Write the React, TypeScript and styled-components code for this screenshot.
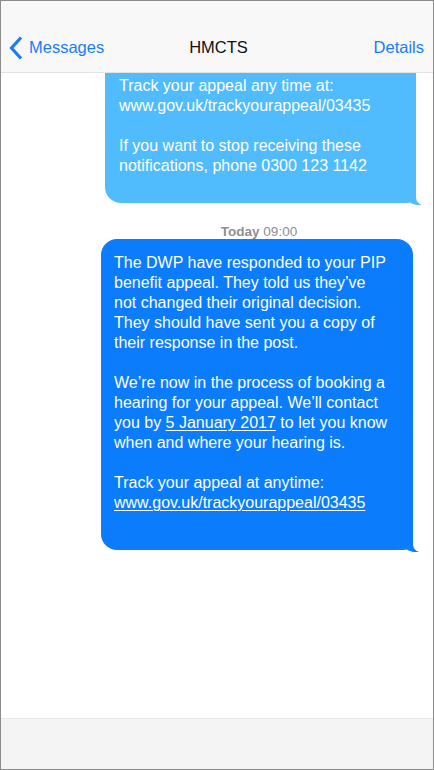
import React from "react";
import styled, { createGlobalStyle } from "styled-components";

const Global = createGlobalStyle`
  html, body { margin: 0; padding: 0; background: #ffffff; }
  body { font-family: "Liberation Sans", Arial, sans-serif; -webkit-font-smoothing: antialiased; }
  * { box-sizing: border-box; }
`;

const Phone = styled.div`
  width: 434px;
  height: 770px;
  border: 1px solid #8c8c8c;
  display: flex;
  flex-direction: column;
  background: #ffffff;
  overflow: hidden;
`;

const NavBar = styled.header`
  height: 72px;
  flex: none;
  padding-top: 22px;
  background: #f8f8f8;
  border-bottom: 1px solid #e2e2e2;
  display: grid;
  grid-template-columns: 1fr auto 1fr;
  align-items: center;
  font-size: 16.5px;
`;

const BackButton = styled.div`
  display: flex;
  align-items: center;
  gap: 5px;
  padding-left: 7px;
  color: #1a7cf7;
`;

const Title = styled.div`
  color: #111111;
  font-weight: 400;
  padding-left: 3px;
`;

const Action = styled.div`
  justify-self: end;
  padding-right: 9px;
  color: #1a7cf7;
`;

const Thread = styled.main`
  flex: 1;
  display: flex;
  flex-direction: column;
  align-items: flex-end;
  overflow: hidden;
`;

const Bubble = styled.div<{ $tone: "light" | "dark"; $clipped?: boolean; $width: number; $right: number; $padBottom: number }>`
  position: relative;
  width: ${(p) => p.$width}px;
  margin-right: ${(p) => p.$right}px;
  padding: ${(p) => (p.$clipped ? "3px 12px" : "14px 12px")} ${(p) => p.$padBottom}px ${(p) => (p.$clipped ? "14px" : "13px")};
  background: ${(p) => (p.$tone === "light" ? "#50bcfd" : "#0a7cfc")};
  color: #ffffff;
  border-radius: ${(p) => (p.$clipped ? "0 0 16px 16px" : "16px")};
  font-size: 16px;
  line-height: 20px;
  white-space: nowrap;
`;

const Tail = styled.svg`
  position: absolute;
  right: -6px;
  bottom: -2px;
  width: 20px;
  height: 20px;
`;

const Para = styled.p`
  margin: 0 0 20px;
  &:last-of-type { margin-bottom: 0; }
`;

const Link = styled.span`
  text-decoration: underline;
  text-decoration-thickness: 1px;
  text-underline-offset: 2px;
`;

const Stamp = styled.div`
  align-self: flex-end;
  width: 348px;
  margin: 22px 0 0;
  text-align: center;
  font-size: 13.5px;
  line-height: 14px;
  color: #8e8e93;
  b { font-weight: 700; }
`;

const Composer = styled.footer`
  height: 51px;
  flex: none;
  background: #f4f4f4;
  border-top: 1px solid #e6e6e6;
`;

const BubbleTail = ({ color }: { color: string }) => (
  <Tail viewBox="0 0 20 20">
    <path d="M0 0 H14 V12 C14 16 16 18.5 20 20 C15 20.5 11 19.5 8 17.5 C6 18 3 18 0 18 Z" fill={color} />
  </Tail>
);

export default function App() {
  return (
    <>
      <Global />
      <Phone>
        <NavBar>
          <BackButton>
            <svg width="16" height="26" viewBox="0 0 16 26">
              <path d="M13 2.5 L3.5 13 L13 23.5" fill="none" stroke="#1a7cf7" strokeWidth="3.2" strokeLinecap="butt" strokeLinejoin="miter" />
            </svg>
            <span>Messages</span>
          </BackButton>
          <Title>HMCTS</Title>
          <Action>Details</Action>
        </NavBar>
        <Thread>
          <Bubble $tone="light" $clipped $width={311} $right={17} $padBottom={27}>
            <Para>
              Track your appeal any time at:
              <br />
              www.gov.uk/trackyourappeal/03435
            </Para>
            <Para>
              If you want to stop receiving these
              <br />
              notifications, phone 0300 123 1142
            </Para>
            <BubbleTail color="#50bcfd" />
          </Bubble>
          <Stamp>
            <b>Today</b> 09:00
          </Stamp>
          <Bubble $tone="dark" $width={312} $right={20} $padBottom={37}>
            <Para>
              The DWP have responded to your PIP
              <br />
              benefit appeal. They told us they’ve
              <br />
              not changed their original decision.
              <br />
              They should have sent you a copy of
              <br />
              their response in the post.
            </Para>
            <Para>
              We’re now in the process of booking a
              <br />
              hearing for your appeal. We’ll contact
              <br />
              you by <Link>5 January 2017</Link> to let you know
              <br />
              when and where your hearing is.
            </Para>
            <Para>
              Track your appeal at anytime:
              <br />
              <Link>www.gov.uk/trackyourappeal/03435</Link>
            </Para>
            <BubbleTail color="#0a7cfc" />
          </Bubble>
        </Thread>
        <Composer />
      </Phone>
    </>
  );
}
